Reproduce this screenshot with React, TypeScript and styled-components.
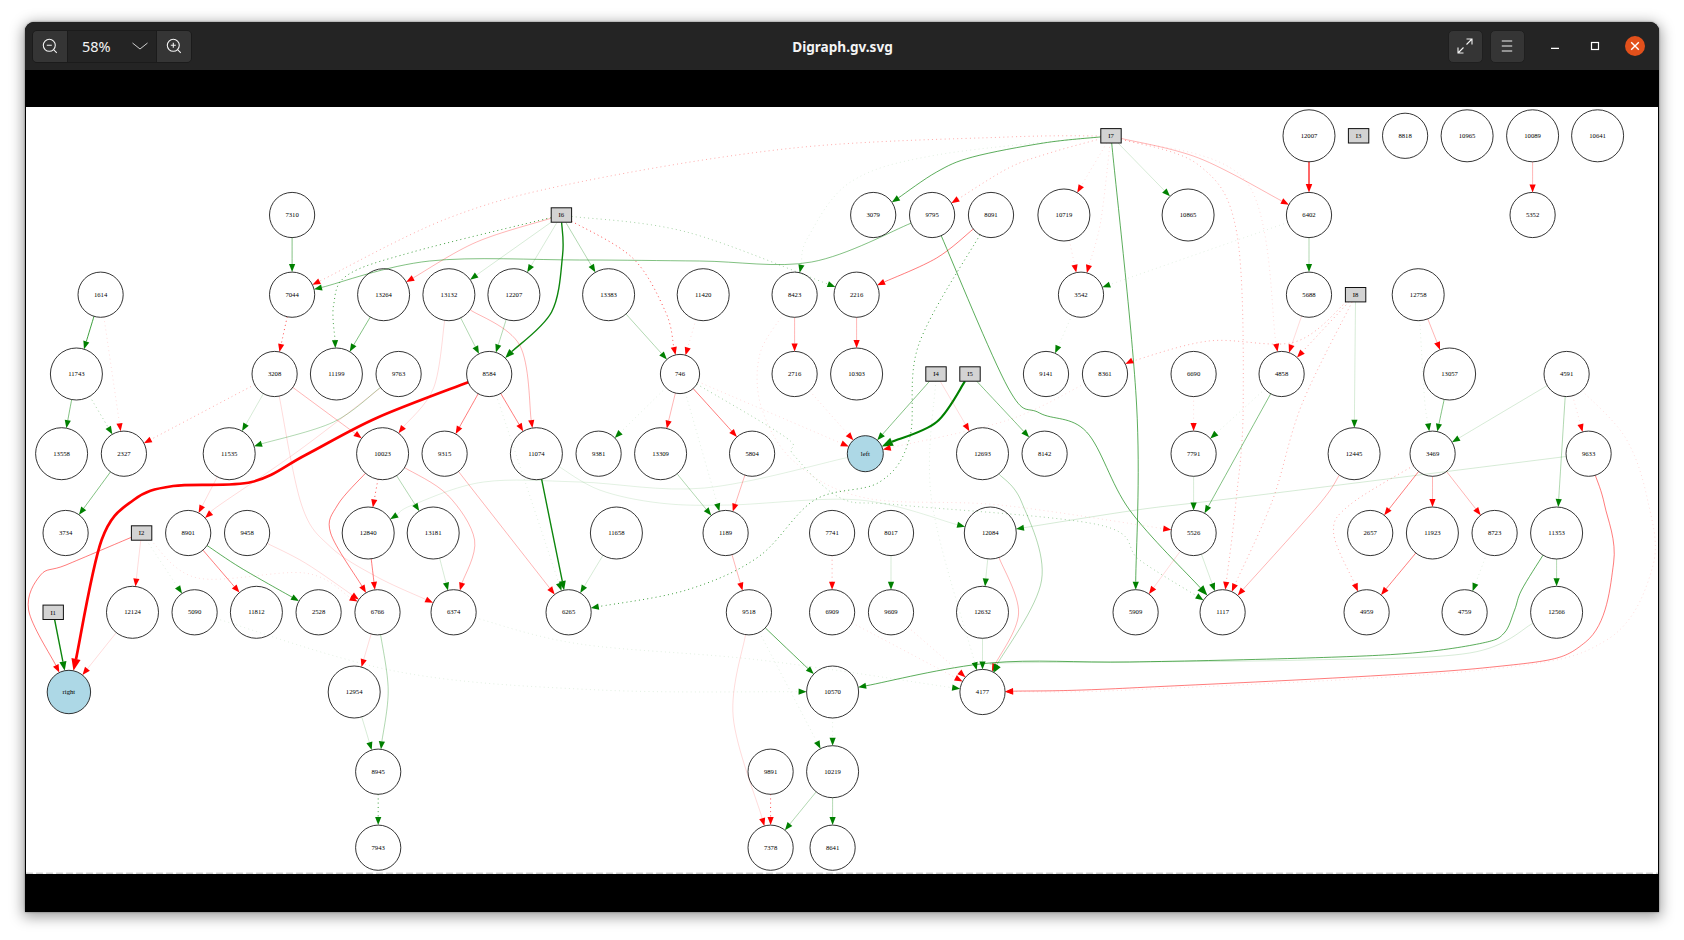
import React from "react";
import styled, { createGlobalStyle } from "styled-components";

const Global = createGlobalStyle`
  html, body { margin: 0; padding: 0; background: #fff; }
  #root { width: 1684px; height: 940px; overflow: hidden; }
`;
const Page = styled.div`
  width: 1684px; height: 940px; box-sizing: border-box;
  padding: 22px 25px 28px 25px; display: flex;
`;
const Window = styled.div`
  flex: 1; display: flex; flex-direction: column; overflow: hidden;
  border-radius: 9px 9px 0 0; background: #000;
  box-shadow: 0 3px 14px 2px rgba(0,0,0,.38), 0 0 2px rgba(0,0,0,.5);
`;
const Header = styled.header`
  height: 48px; flex: none; box-sizing: border-box; background: #242424;
  display: grid; grid-template-columns: 1fr auto 1fr; align-items: center; padding: 0 6px 0 7px;
`;
const Left = styled.div`display: flex; align-items: center;`;
const Right = styled.div`display: flex; align-items: center; justify-content: flex-end;`;
const Group = styled.div`
  display: flex; height: 33px; box-sizing: border-box; border: 1px solid #1b1b1b; border-radius: 5px; overflow: hidden;
`;
const GroupButton = styled.div`
  width: 34px; background: #353535; display: flex; align-items: center; justify-content: center;
`;
const ZoomPicker = styled.div`
  width: 90px; border-left: 1px solid #1b1b1b; border-right: 1px solid #1b1b1b; background: #242424;
  display: flex; align-items: center; justify-content: space-between; padding: 0 8px 0 14px; box-sizing: border-box;
  color: #f4f4f4; font: 400 14.5px "Noto Sans", sans-serif;
`;
const Title = styled.div`
  color: #f4f4f4; font: 700 13.6px "Noto Sans", sans-serif;
`;
const HeaderButton = styled.div`
  width: 35px; height: 33px; box-sizing: border-box; border: 1px solid #1f1f1f; border-radius: 5px; background: #353535;
  display: flex; align-items: center; justify-content: center; margin-left: 7px;
`;
const WinControls = styled.div`
  display: flex; align-items: center; margin-left: 12.500px;
`;
const WinControl = styled.div<{ $w: number }>`
  width: ${p => p.$w}px; height: 33px; display: flex; align-items: center; justify-content: center;
`;
const CloseDot = styled.div`
  width: 20px; height: 20px; border-radius: 50%; background: #e2501b; display: flex; align-items: center; justify-content: center;
`;
const Content = styled.main`
  flex: 1; min-height: 0; padding: 37px 1px 38px; background: #000; display: flex;
`;
const Canvas = styled.svg`
  display: block; flex: 1; height: 767px; background: #fff;
  text { font-family: "Liberation Serif", serif; font-size: 6.7px; text-anchor: middle; fill: #000; }
`;

type P = [number, number];
type N = { id: string; x: number; y: number; r?: number; box?: boolean; fill?: string };
const RY = [135.8, 215, 294.7, 374, 453.7, 533, 612.3, 692, 771.7, 847.7];
const raw: [string, number, number, number?][] = [
  ["7310",292.5,1],["7044",292.5,2],["1614",101,2],["13264",384,2],["13132",449.3,2],["12207",514.3,2],
  ["11743",76.8,3],["3208",275,3],["11199",336.8,3],["9763",399,3],["8584",489.6,3],
  ["13558",62,4],["2327",124.3,4],["11535",229.6,4],["10023",383,4],["9315",445,4],["11074",536.8,4],
  ["3079",873.6,1],["9795",932.5,1],["8091",991.4,1],["10719",1064.3,1],
  ["13383",609,2],["11420",703.6,2],["8423",795,2],["2216",857,2],["3542",1081.4,2],
  ["746",680.4,3,19.6],["2716",795,3],["10303",857,3],["9141",1046.4,3],["8361",1105.4,3],
  ["9381",599,4],["13309",661,4],["5804",752.5,4],["12693",982.9,4],["8142",1045,4],
  ["12007",1309.4,0],["8818",1405.5,0],["10965",1467.5,0],["10089",1533,0],["10641",1598,0],
  ["10865",1188.5,1],["6402",1309.4,1],["5352",1533,1],["5688",1309.4,2],["12758",1418.6,2],
  ["6690",1194,3],["4858",1282,3],["13057",1450,3],["4591",1567,3],
  ["7791",1194,4],["12445",1354.5,4],["3469",1433,4],["9633",1589,4],
  ["3734",66,5],["8901",188.6,5],["9458",247.5,5],["12840",368.6,5],["13181",433.6,5],
  ["12124",132.9,6],["5090",195,6],["11812",256.8,6],["2528",319,6],["6766",377.9,6],["6374",454,6],["6265",569,6],
  ["12954",354.6,7],["8945",378.6,8],["7943",378.6,9],
  ["11658",616.8,5],["1189",726,5],["7741",832.5,5],["8017",891.4,5],["12084",990.7,5],
  ["9518",749.3,6],["6909",832.5,6],["9609",891.4,6],["12632",982.9,6],["5909",1136,6],
  ["10570",833,7],["4177",982.9,7],["9891",771,8],["10219",833,8],["7378",771,9],["8641",833,9],
  ["5526",1194,5],["2657",1370.6,5],["11923",1432.8,5],["8723",1495,5],["11353",1557,5],
  ["1117",1223,6],["4959",1367,6],["4759",1465,6],["12566",1557,6],
];
const nodes: N[] = [
  ...raw.map(([id, x, row, r]) => ({ id, x, y: RY[row], r: r ?? (id.length === 5 ? 26 : 22.6) })),
  { id: "left", x: 865.7, y: RY[4], r: 18, fill: "#add8e6" },
  { id: "right", x: 69.3, y: RY[7], r: 21.7, fill: "#add8e6" },
  { id: "I1", x: 53.6, y: RY[6], box: true },
  { id: "I2", x: 142, y: RY[5], box: true },
  { id: "I3", x: 1359, y: RY[0], box: true },
  { id: "I4", x: 936.4, y: RY[3], box: true },
  { id: "I5", x: 970.4, y: RY[3], box: true },
  { id: "I6", x: 561.8, y: RY[1], box: true },
  { id: "I7", x: 1111.4, y: RY[0], box: true },
  { id: "I8", x: 1356, y: RY[2], box: true },
];
const byId: Record<string, N> = Object.fromEntries(nodes.map(n => [n.id, n]));

type Style = { c: string; o: number; w: number; dash?: boolean; a?: number };
const S: Record<string, Style> = {
  GG: { c: "#008000", o: 1, w: 2.2, a: 1.4 },
  G: { c: "#008000", o: .95, w: 1.4, a: 1.15 },
  f: { c: "#008000", o: .8, w: .95 },
  m: { c: "#008000", o: .68, w: .95 },
  n: { c: "#008000", o: .68, w: .95, a: 1.3 },
  g: { c: "#008000", o: .55, w: .9 },
  h: { c: "#008000", o: .34, w: .9 },
  l: { c: "#008000", o: .18, w: .9 },
  k: { c: "#008000", o: .13, w: .9 },
  gd: { c: "#008000", o: .75, w: 1, dash: true },
  hd: { c: "#008000", o: .4, w: .9, dash: true },
  ld: { c: "#008000", o: .15, w: .8, dash: true },
  RR: { c: "#ff0000", o: 1, w: 2.7, a: 1.5 },
  R: { c: "#ff0000", o: .95, w: 1.25, a: 1.05 },
  r: { c: "#ff0000", o: .55, w: .95 },
  s: { c: "#ff0000", o: .33, w: .9 },
  t: { c: "#ff0000", o: .16, w: .9 },
  rd: { c: "#ff0000", o: .7, w: 1, dash: true },
  sd: { c: "#ff0000", o: .38, w: .9, dash: true },
  td: { c: "#ff0000", o: .18, w: .8, dash: true },
};
type E = [string, string, string, P[]?];
const edges: E[] = [
  ["I6","8584","G",[[563,255],[552,312]]],
  ["I6","13264","s",[[477,242]]],["I6","13132","l"],["I6","12207","l"],["I6","13383","h"],
  ["I6","11199","gd",[[413,252],[348,275],[334,305]]],
  ["I6","746","rd",[[633,258],[666,312]]],
  ["I6","2216","hd",[[687,232]]],
  ["9795","7044","g",[[812,262],[700,261],[580,260],[430,261]]],
  ["I7","8423","ld",[[937,155],[851,182],[808,238]]],
  ["7310","7044","g"],["1614","11743","f"],["1614","2327","td"],["7044","3208","rd"],["13264","11199","g"],
  ["13132","8584","h"],["13132","11074","s",[[520,345]]],["13132","10023","t",[[434,388]]],["12207","8584","h"],
  ["11743","13558","g"],["11743","2327","hd"],["3208","2327","sd"],["3208","11535","l"],["3208","10023","s"],
  ["3208","6374","t",[[302,505],[330.7,546.7],[377,576.7]]],
  ["9763","11535","h",[[334,422]]],["9763","8901","t",[[300,450],[220,505]]],["11535","8901","t"],
  ["8584","right","RR",[[377,418],[306,455],[252,482],[173.6,486],[134,500],[102,540]]],
  ["8584","9315","r"],["8584","11074","r"],["8584","6265","ld"],
  ["10023","6766","r",[[338,505],[331,533]]],["10023","12840","rd"],["10023","13181","h"],
  ["10023","6374","s",[[448,495],[475,540]]],["9315","6265","s"],["11074","6265","G"],
  ["left","12840","k",[[705,488],[580,482],[484,482],[413,505]]],
  ["11074","12084","k",[[600,490],[660,503],[730,505],[860,500]]],
  ["13383","746","h"],["11420","746","td"],["746","13309","s"],["746","5804","r"],["746","9381","ld"],
  ["746","1189","ld"],["13309","1189","h"],["5804","1189","s"],["746","left","td"],["2716","left","td"],
  ["8423","5526","td",[[760,355],[762,408],[795,462],[866,498],[1000,505]]],
  ["746","1117","hd",[[787,438],[794,455],[841,498],[900,505],[1100,525],[1140,560]]],
  ["8091","6265","gd",[[919,345],[910,438],[880,482],[815,500],[758.6,557],[687,590]]],
  ["8091","2216","r",[[937,258]]],
  ["9795","1117","n",[[1008.6,388],[1040,413],[1087,432],[1130,510]]],
  ["8423","2716","s"],["2216","10303","s"],
  ["I7","3079","m",[[1044,143],[973,157],[937,172]]],["I7","9795","sd",[[1050,153],[1009,168]]],["I7","10719","td"],
  ["I7","3542","td",[[1101,222]]],["I7","5909","m",[[1137,405]]],["I7","10865","l"],["I7","6402","s",[[1199,158]]],
  ["I7","7044","sd",[[1008,137],[794,148],[580,182],[449,218]]],
  ["I7","1117","sd",[[1199,165],[1237,232],[1243.6,405],[1236,505]]],
  ["I7","4858","td",[[1247,182]]],
  ["I8","1117","sd",[[1302,405],[1273,500]]],
  ["I8","8361","sd",[[1295,342],[1209,341],[1130,362]]],
  ["I8","4858","sd"],["I8","12445","l"],["5688","4858","t"],
  ["6402","3542","ld"],["3542","9141","ld"],["10719","3542","td"],
  ["12007","6402","R"],["10089","5352","s"],["6402","5688","h"],["12758","13057","s"],["12758","3469","ld",[[1425,400]]],
  ["13057","3469","g"],["4591","3469","l"],["4591","11353","h"],["4591","9633","td"],
  ["4591","4177","td",[[1626,438],[1648,500],[1653,567],[1607,640],[1483,670],[1130,690]]],
  ["5090","10570","ld",[[400,672],[600,690]]],
  ["6374","4177","ld",[[580,644],[760,660]]],["6909","4177","td"],["9609","4177","td"],
  ["I4","4177","ld",[[932,500]]],
  ["9518","10219","ld"],["10570","10219","ld"],["9518","10570","m"],
  ["9518","7378","t",[[733.6,717]]],["9891","7378","rd"],["10219","7378","h"],["10219","8641","h"],
  ["1189","9518","s"],["7741","6909","sd"],["8017","9609","l"],["12084","12632","l"],["12632","4177","l"],
  ["12084","4177","s",[[1019,613]]],["12693","4177","h",[[1022,502],[1042,580]]],
  ["12445","1117","s",[[1319,505]]],
  ["I4","left","g"],["I5","left","GG",[[937,422]]],["I5","8142","g"],["I4","12693","t"],
  ["8361","left","td",[[1008.6,420]]],
  ["I2","right","r",[[66.4,565],[41,575],[29,610]]],
  ["I2","12124","t"],["I2","5090","ld"],["I2","6766","td",[[198,578],[305,573]]],
  ["I1","right","G"],["12124","right","t"],["8901","11812","r"],["8901","2528","m",[[241.4,568]]],
  ["9458","6766","t",[[305.7,563]]],["12840","6766","r"],["13181","6374","l"],["6766","12954","t"],
  ["6766","8945","h",[[388.6,690]]],["12954","8945","l"],["8945","7943","gd"],["2327","3734","g"],["11658","6265","l"],
  ["11353","10570","m",[[1522,590],[1515,610],[1504.6,633],[1483,643],[1413,653],[1307,658],[1130,662],[990,663]]],
  ["12566","4177","l",[[1470,653],[1307,660],[1130,662],[1000,663]]],
  ["9633","4177","r",[[1605,505],[1614,563],[1586,642],[1483,668],[1130,688]]],
  ["3469","2657","r"],["3469","11923","s"],["3469","8723","s"],
  ["3469","4959","sd",[[1350,505],[1334,533]]],["11923","4959","r"],["8723","4759","ld"],["11353","12566","h"],
  ["9633","12084","l",[[1236,498],[1137,510]]],["4858","7791","ld"],["4858","5526","g"],["6690","7791","td"],
  ["7791","5526","l"],["5526","5909","t"],["5526","1117","l"],
];

const OX = 26.4, OY = 107;
function rim(n: N, to: P): P {
  const dx = to[0] - n.x, dy = to[1] - n.y, d = Math.hypot(dx, dy) || 1;
  if (n.box) {
    const k = Math.min(10.2 / Math.abs(dx || .001), 7.2 / Math.abs(dy || .001));
    return [n.x + dx * k, n.y + dy * k];
  }
  const r = n.r ?? 22.6;
  return [n.x + (dx / d) * r, n.y + (dy / d) * r];
}
function spline(p: P[]): string {
  let d = `M${p[0][0].toFixed(1)} ${p[0][1].toFixed(1)}`;
  for (let i = 0; i < p.length - 1; i++) {
    const a = p[i - 1] ?? p[i], b = p[i], c = p[i + 1], e = p[i + 2] ?? c;
    const c1: P = [b[0] + (c[0] - a[0]) / 6, b[1] + (c[1] - a[1]) / 6];
    const c2: P = [c[0] - (e[0] - b[0]) / 6, c[1] - (e[1] - b[1]) / 6];
    d += `C${c1[0].toFixed(1)} ${c1[1].toFixed(1)} ${c2[0].toFixed(1)} ${c2[1].toFixed(1)} ${c[0].toFixed(1)} ${c[1].toFixed(1)}`;
  }
  return d;
}
function Edge({ e }: { e: E }) {
  const [f, t, sk, pts = []] = e;
  const a = byId[f], b = byId[t], st = S[sk], k = st.a ?? 1;
  const s = rim(a, pts[0] ?? [b.x, b.y]);
  const tip = rim(b, pts[pts.length - 1] ?? [a.x, a.y]);
  const prev = pts[pts.length - 1] ?? s;
  const dx = prev[0] - tip[0], dy = prev[1] - tip[1], d = Math.hypot(dx, dy) || 1;
  const ux = dx / d, uy = dy / d, len = 8 * k, hw = 3.1 * k;
  const base: P = [tip[0] + ux * len, tip[1] + uy * len];
  const arrow = `${tip[0]},${tip[1]} ${base[0] - uy * hw},${base[1] + ux * hw} ${base[0] + uy * hw},${base[1] - ux * hw}`;
  return (
    <g>
      <path d={spline([s, ...pts, base])} fill="none" stroke={st.c} strokeOpacity={st.o} strokeWidth={st.w}
        strokeDasharray={st.dash ? "1 3.2" : undefined} />
      <polygon points={arrow} fill={st.c} />
    </g>
  );
}

const Ico = { stroke: "#f2f2f2", fill: "none", strokeWidth: 1.1 };
export default function App() {
  return (
    <>
      <Global />
      <Page>
        <Window>
          <Header>
            <Left>
              <Group>
                <GroupButton>
                  <svg width="16" height="16" viewBox="0 0 16 16" {...Ico}><circle cx="7.3" cy="7.3" r="6" /><path d="M4.8 7.3h5M11.8 11.8l3 3" /></svg>
                </GroupButton>
                <ZoomPicker>
                  <span>58%</span>
                  <svg width="16" height="8" viewBox="0 0 16 8" fill="none" stroke="#cfcfcf" strokeWidth="1"><path d="M.5 1l7.500 6 7.500-6" /></svg>
                </ZoomPicker>
                <GroupButton>
                  <svg width="16" height="16" viewBox="0 0 16 16" {...Ico}><circle cx="7.3" cy="7.3" r="6" /><path d="M4.8 7.3h5M7.3 4.8v5M11.8 11.8l3 3" /></svg>
                </GroupButton>
              </Group>
            </Left>
            <Title>Digraph.gv.svg</Title>
            <Right>
              <HeaderButton>
                <svg width="16" height="16" viewBox="0 0 16 16" {...Ico}><path d="M1 9.500V15h5.500M1 15l5.500-5.500M9.500 1H15v5.500M15 1L9.500 6.500" /></svg>
              </HeaderButton>
              <HeaderButton>
                <svg width="12" height="12" viewBox="0 0 12 12" {...Ico}><path d="M.8 1h10.400M.8 6h10.400M.8 11h10.400" /></svg>
              </HeaderButton>
              <WinControls>
                <WinControl $w={36}>
                  <svg width="10" height="10" viewBox="0 0 10 10" stroke="#fff" strokeWidth="1.2"><path d="M1 7.300h8" /></svg>
                </WinControl>
                <WinControl $w={44}>
                  <svg width="10" height="10" viewBox="0 0 10 10" stroke="#fff" strokeWidth="1.200" fill="none"><rect x="1.500" y="1.500" width="7" height="7" /></svg>
                </WinControl>
                <WinControl $w={36}>
                  <CloseDot>
                    <svg width="10" height="10" viewBox="0 0 10 10" stroke="#fff" strokeWidth="1.400"><path d="M1.200 1.200l7.600 7.600M8.800 1.200L1.200 8.800" /></svg>
                  </CloseDot>
                </WinControl>
              </WinControls>
            </Right>
          </Header>
          <Content>
            <Canvas viewBox={`${OX} ${OY} 1632 767`} width="1632" height="767">
              <line x1={OX} x2={OX + 1632} y1={OY + 766.2} y2={OY + 766.2} stroke="#b8b8b8" strokeWidth="1" strokeDasharray="7 3" />
              {edges.map((e, i) => <Edge key={i} e={e} />)}
              {nodes.map(n => n.box ? (
                <g key={n.id}>
                  <rect x={n.x - 10.2} y={n.y - 7.2} width="20.400" height="14.400" fill="#d3d3d3" stroke="#111" strokeWidth="1" />
                  <text x={n.x} y={n.y + 2.2}>{n.id}</text>
                </g>
              ) : (
                <g key={n.id}>
                  <circle cx={n.x} cy={n.y} r={n.r} fill={n.fill ?? "none"} stroke="#111" strokeWidth=".85" />
                  <text x={n.x} y={n.y + 1.8}>{n.id}</text>
                </g>
              ))}
            </Canvas>
          </Content>
        </Window>
      </Page>
    </>
  );
}
